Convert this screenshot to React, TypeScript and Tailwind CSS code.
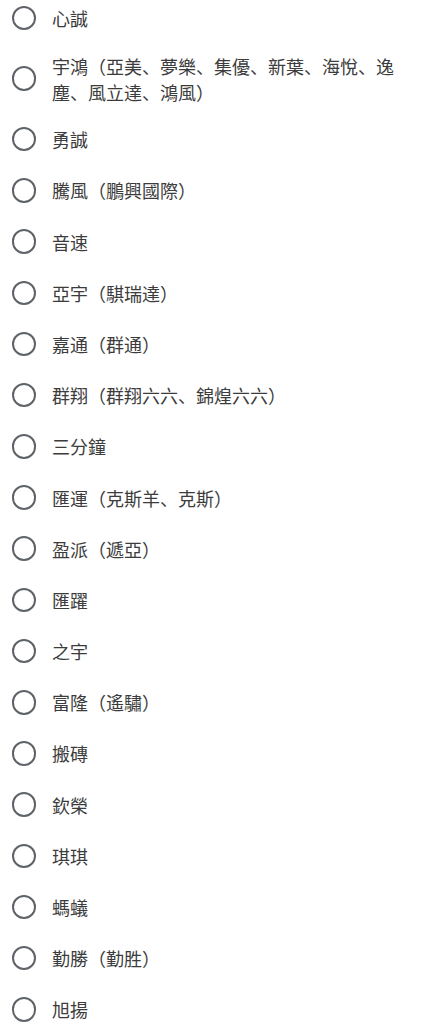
import React from "react";

const items = [
  "心誠",
  "宇鴻（亞美、夢樂、集優、新葉、海悅、逸塵、風立達、鴻風）",
  "勇誠",
  "騰風（鵬興國際）",
  "音速",
  "亞宇（騏瑞達）",
  "嘉通（群通）",
  "群翔（群翔六六、錦煌六六）",
  "三分鐘",
  "匯運（克斯羊、克斯）",
  "盈派（遞亞）",
  "匯躍",
  "之宇",
  "富隆（遙驌）",
  "搬磚",
  "欽榮",
  "琪琪",
  "螞蟻",
  "勤勝（勤胜）",
  "旭揚",
];

export default function App() {
  return (
    <div
      className="w-[421px] h-[1024px] overflow-hidden bg-white"
      style={{ fontFamily: '"Noto Sans CJK SC", "Noto Sans", sans-serif' }}
    >
      <div className="flex flex-col mt-[-7.6px]">
        {items.map((t) => (
          <div key={t} className="flex items-center min-h-[51.2px] py-[9px]">
            <div className="ml-[11.5px] w-[24.5px] h-[24.5px] shrink-0 rounded-full border-[2.5px] border-[#5f6368]" />
            <div className="ml-[16px] w-[346px] text-[18px] leading-[26px] text-[#3c3c3c]">
              {t}
            </div>
          </div>
        ))}
      </div>
    </div>
  );
}
